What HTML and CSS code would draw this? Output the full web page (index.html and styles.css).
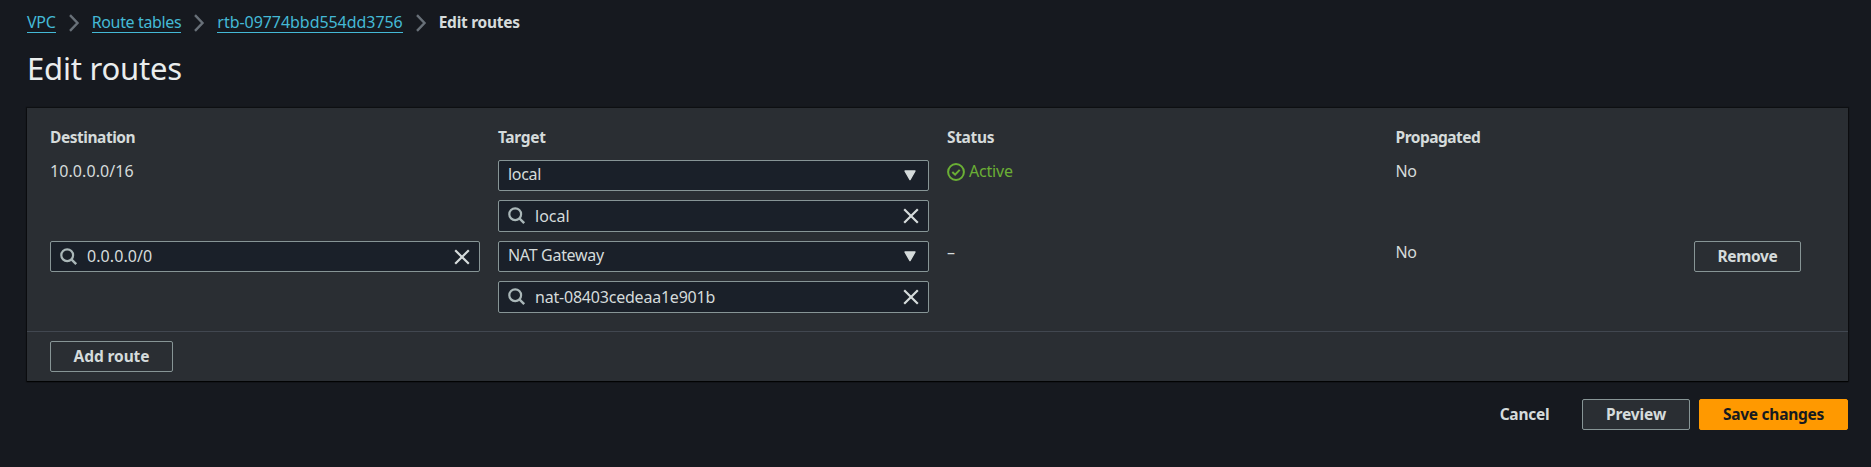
FILE: index.html
```html
<!DOCTYPE html>
<html lang="en">
<head>
<meta charset="utf-8">
<title>Edit routes</title>
<link rel="stylesheet" href="styles.css">
</head>
<body>
<svg class="defs" aria-hidden="true">
  <symbol id="chevron" viewBox="0 0 12 18"><path d="M2 1.2 9.5 9 2 16.8" fill="none" stroke="#687078" stroke-width="2.4"/></symbol>
  <symbol id="search" viewBox="0 0 18 18"><circle cx="7.2" cy="7.2" r="5.9" fill="none" stroke="currentColor" stroke-width="2.2"/><path d="m11.4 11.4 4.8 4.8" stroke="currentColor" stroke-width="2.4"/></symbol>
  <symbol id="close" viewBox="0 0 16 16"><path d="m1.2 1.2 13.6 13.6M14.8 1.2 1.2 14.8" fill="none" stroke="currentColor" stroke-width="2.2"/></symbol>
  <symbol id="caret" viewBox="0 0 12 11"><path d="M1 1h10L6 9.6Z" fill="currentColor" stroke="currentColor" stroke-width="1.4" stroke-linejoin="round"/></symbol>
</svg>
<nav class="breadcrumbs">
  <a class="link vpc" href="#">VPC</a><svg class="chevron"><use href="#chevron"/></svg>
  <a class="link tables" href="#">Route tables</a><svg class="chevron"><use href="#chevron"/></svg>
  <a class="link rtb" href="#">rtb-09774bbd554dd3756</a><svg class="chevron"><use href="#chevron"/></svg>
  <span class="current">Edit routes</span>
</nav>
<h1 class="title">Edit routes</h1>
<main class="panel">
  <div class="routes">
    <div class="row head">
      <span class="destination">Destination</span><span>Target</span><span>Status</span><span class="propagated">Propagated</span>
    </div>
    <div class="row">
      <div class="cidr">10.0.0.0/16</div>
      <div class="fields">
        <div class="field select"><span class="value">local</span><svg class="caret"><use href="#caret"/></svg></div>
        <div class="field input tall"><svg class="search"><use href="#search"/></svg><span class="value">local</span><svg class="close"><use href="#close"/></svg></div>
      </div>
      <div class="active"><svg class="check" viewBox="0 0 18 18"><circle cx="9" cy="9" r="7.9" fill="none" stroke="currentColor" stroke-width="2"/><path d="m5.3 9 2.8 2.7 4.6-4.8" fill="none" stroke="currentColor" stroke-width="2"/></svg><span>Active</span></div>
      <div class="no">No</div>
    </div>
    <div class="row">
      <div class="fields">
        <div class="field input"><svg class="search"><use href="#search"/></svg><span class="value cidr">0.0.0.0/0</span><svg class="close"><use href="#close"/></svg></div>
      </div>
      <div class="fields">
        <div class="field select"><span class="value">NAT Gateway</span><svg class="caret"><use href="#caret"/></svg></div>
        <div class="field input tall"><svg class="search"><use href="#search"/></svg><span class="value nat">nat-08403cedeaa1e901b</span><svg class="close"><use href="#close"/></svg></div>
      </div>
      <div>–</div>
      <div class="no">No</div>
      <button class="button remove">Remove</button>
    </div>
  </div>
  <div class="footer"><button class="button add">Add route</button></div>
</main>
<div class="actions">
  <button class="button cancel">Cancel</button>
  <button class="button preview">Preview</button>
  <button class="button save">Save changes</button>
</div>
</body>
</html>
```
FILE: styles.css
```css
* { box-sizing: border-box; }
body { margin: 0; padding: 0 23px 0 27px; height: 467px; overflow: hidden; background: #16191f; color: #d5dbdb; font: 16px/24px "Noto Sans", sans-serif; }
.defs { position: absolute; width: 0; height: 0; }
svg { flex: none; }
.breadcrumbs { display: flex; align-items: flex-start; height: 45px; padding-top: 11px; }
.link { color: #44b9d6; text-decoration: none; border-bottom: 1px solid #44b9d6; height: 22px; line-height: 23px; }
.vpc { letter-spacing: -0.25px; }
.tables { letter-spacing: -0.35px; }
.rtb { letter-spacing: -0.05px; }
.chevron { width: 12px; height: 18px; margin: 3px 12px 0; }
.current { font-size: 15.5px; font-weight: 700; line-height: 23px; letter-spacing: -0.28px; }
.title { margin: 0; height: 63px; font-size: 31px; line-height: 47px; font-weight: 400; letter-spacing: -0.2px; color: #eaeded; }
.panel { height: 273px; background: #2a2e33; box-shadow: 0 1px 1px #000c, 0 0 1px 1px #0006; }
.routes { height: 223px; padding: 17px 23px 0; }
.row { display: grid; grid-template-columns: 430px 431px 430.5px 280.5px 107px; column-gap: 18px; height: 81px; line-height: 23px; }
.head { height: 35px; font-size: 15.5px; font-weight: 700; line-height: 24px; letter-spacing: -0.33px; }
.destination { letter-spacing: -0.46px; }
.propagated { letter-spacing: -0.5px; }
.cidr { letter-spacing: 0.08px; }
.no { letter-spacing: -0.4px; }
.fields { display: flex; flex-direction: column; gap: 9px; }
.field { display: flex; align-items: center; height: 31px; padding: 0 9px; background: #1a2029; border: 1px solid #879596; border-radius: 2px; }
.tall { height: 32px; }
.value { flex: 1; }
.select .value { letter-spacing: -0.3px; padding-bottom: 2px; }
.nat { letter-spacing: -0.21px; }
.search { width: 18px; height: 18px; color: #aab7b8; margin-right: 9px; }
.close { width: 16px; height: 16px; }
.caret { width: 12px; height: 11px; margin-right: 3px; }
.active { display: flex; color: #6aaf35; letter-spacing: -0.2px; }
.check { width: 18px; height: 18px; margin: 3px 4px 0 0; }
.button { height: 31px; padding: 0 0 1px; font: 700 15.5px/27px "Noto Sans", sans-serif; letter-spacing: -0.25px; color: #d5dbdb; background: #2a2e33; border: 1px solid #879596; border-radius: 2px; }
.footer { height: 50px; padding: 9px 23px; border-top: 1px solid #414750; }
.remove { width: 107px; letter-spacing: -0.35px; }
.add { width: 123px; letter-spacing: -0.1px; }
.actions { display: flex; justify-content: flex-end; padding-top: 18px; }
.cancel { width: 97px; margin-right: 9px; background: none; border-color: transparent; }
.preview { width: 108px; margin-right: 9px; letter-spacing: -0.1px; }
.save { width: 149px; color: #16191f; background: #f90; border-color: #f90; }
```
